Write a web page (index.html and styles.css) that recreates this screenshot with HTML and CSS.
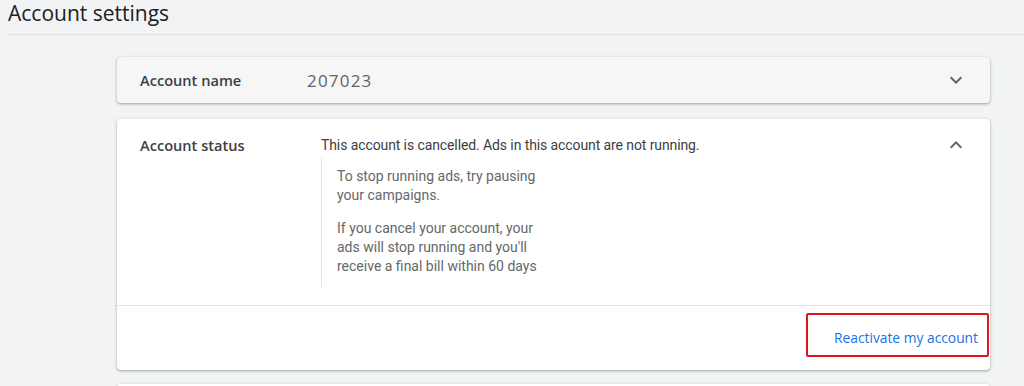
FILE: index.html
```html
<!DOCTYPE html>
<html>
<head>
<meta charset="utf-8">
<link rel="stylesheet" href="styles.css">
</head>
<body>
<header class="page-header">
  <h1 class="page-title">Account settings</h1>
</header>
<main class="settings">
  <section class="card card-collapsed">
    <div class="row">
      <div class="label label-name">Account name</div>
      <div class="value muted">207023</div>
      <svg class="chevron" viewBox="0 0 24 24" width="24" height="24"><path d="M7.41 8.59 12 13.17l4.59-4.58L18 10l-6 6-6-6z" fill="#5f6368"/></svg>
    </div>
  </section>
  <section class="card card-open">
    <div class="row row-open">
      <div class="label">Account status</div>
      <div class="value">
        <div class="status">This account is cancelled. Ads in this account are not running.</div>
        <div class="note">
          <p>To stop running ads, try pausing your campaigns.</p>
          <p>If you cancel your account, your ads will stop running and you'll receive a final bill within 60 days</p>
        </div>
      </div>
      <svg class="chevron chevron-up" viewBox="0 0 24 24" width="24" height="24"><path d="M7.41 15.41 12 10.83l4.59 4.58L18 14l-6-6-6 6z" fill="#5f6368"/></svg>
    </div>
    <div class="footer">
      <div class="highlight"><a class="action" href="#">Reactivate my account</a></div>
    </div>
  </section>
  <section class="card card-next"></section>
</main>
</body>
</html>
```
FILE: styles.css
```css
html, body {
  margin: 0;
  padding: 0;
  background: #f1f3f4;
  font-family: Roboto, "Liberation Sans", sans-serif;
  color: #3c4043;
  height: 386px;
  overflow: hidden;
}
.page-header {
  margin: 0 0 0 8px;
  border-bottom: 1px solid #e0e1e3;
  height: 34px;
}
.page-title {
  margin: 0;
  padding-top: 0;
  font-family: "Open Sans", Roboto, sans-serif;
  font-weight: 400;
  font-size: 21px;
  line-height: 27px;
  color: #202124;
}
.settings {
  margin-left: 117px;
  width: 873px;
  padding-top: 22px;
}
.card {
  background: #fff;
  border-radius: 4px;
  box-shadow: 0 1px 2px rgba(60,64,67,0.3), 0 1px 3px 1px rgba(60,64,67,0.12);
}
.card-collapsed {
  background: #f6f6f7;
  height: 46px;
}
.row {
  display: flex;
  align-items: center;
  height: 46px;
  padding: 0 22px 0 23px;
}
.label {
  width: 181px;
  flex: none;
  font-family: "Open Sans", Roboto, sans-serif;
  font-size: 14.6px;
  font-weight: 600;
  color: #3c4043;
}
.label-name {
  width: 167px;
}
.value {
  flex: 1;
  font-size: 14px;
}
.muted {
  color: #5f6368;
  font-family: "Open Sans", Roboto, sans-serif;
  font-size: 17px;
  letter-spacing: 1.2px;
}
.chevron {
  flex: none;
}
.card-open {
  margin-top: 16px;
  height: 251px;
  display: flex;
  flex-direction: column;
}
.row-open {
  align-items: flex-start;
  height: auto;
  padding-top: 16px;
  flex: 1;
}
.row-open .label {
  line-height: 20px;
}
.row-open .chevron {
  margin-top: -2px;
}
.status {
  font-size: 14px;
  line-height: 20px;
  letter-spacing: -0.1px;
  color: #3c4043;
}
.note {
  margin-top: 2px;
  border-left: 1px solid #e3e4e6;
  padding: 10px 0 11px 15px;
  width: 210px;
  color: #646869;
  font-size: 14px;
  line-height: 19px;
}
.note p {
  margin: 0 0 14px 0;
}
.note p:last-child {
  margin-bottom: 0;
}
.footer {
  border-top: 1px solid #e3e4e6;
  height: 64px;
  display: flex;
  justify-content: flex-end;
  align-items: flex-start;
}
.highlight {
  margin-top: 7px;
  margin-right: 1px;
  border: 2px solid #e0141e;
  border-radius: 2px;
  display: flex;
  justify-content: flex-end;
  align-items: flex-end;
  padding: 0 9px 8px 0;
  box-sizing: content-box;
  width: 170px;
  height: 32px;
}
.action {
  color: #1a73e8;
  text-decoration: none;
  font-family: "Open Sans", Roboto, sans-serif;
  font-size: 13.8px;
  font-weight: 500;
}
.card-next {
  margin-top: 14px;
  height: 40px;
}
```
